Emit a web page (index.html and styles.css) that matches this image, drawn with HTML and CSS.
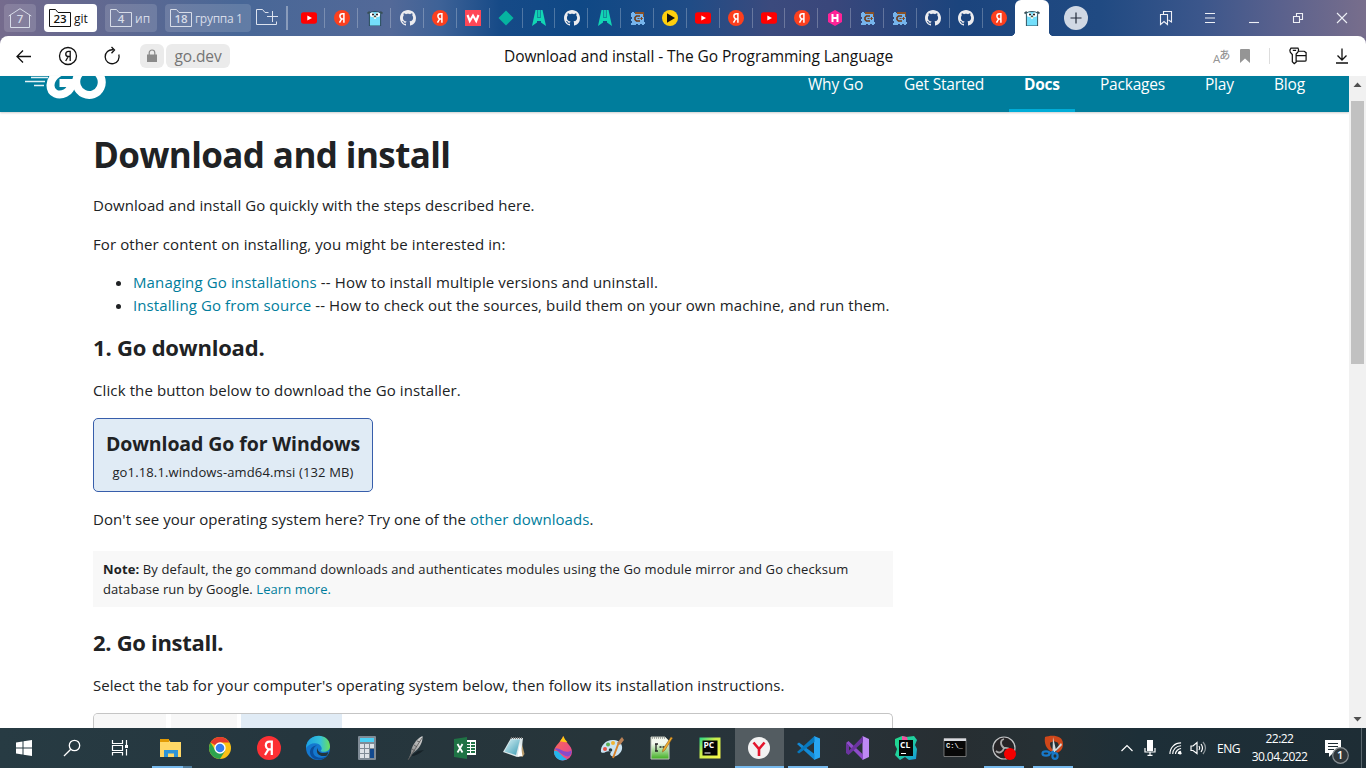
FILE: index.html
```html
<!DOCTYPE html>
<html lang="en">
<head>
<meta charset="utf-8">
<title>Download and install - The Go Programming Language</title>
<link rel="stylesheet" href="styles.css">
</head>
<body>
<svg class="defs" aria-hidden="true">
  <defs>
    <linearGradient id="edge-a" x1="0" y1="0" x2="1" y2="0"><stop offset="0" stop-color="#1ba1e2"/><stop offset=".6" stop-color="#35c1d8"/><stop offset="1" stop-color="#6be05a"/></linearGradient>
    <linearGradient id="drop" x1="0" y1="0" x2="1" y2="1"><stop offset="0" stop-color="#ff6a4d"/><stop offset="1" stop-color="#e0449a"/></linearGradient>
    <linearGradient id="pc" x1="0" y1="0" x2="1" y2="1"><stop offset="0" stop-color="#21d789"/><stop offset=".4" stop-color="#c8ee4c"/><stop offset="1" stop-color="#fcf84a"/></linearGradient>
    <linearGradient id="note" x1="0" y1="0" x2="1" y2="1"><stop offset="0" stop-color="#d8f1f5"/><stop offset="1" stop-color="#3d9db5"/></linearGradient>
    <linearGradient id="npp" x1="0" y1="0" x2="0" y2="1"><stop offset=".3" stop-color="#f4f9ef"/><stop offset="1" stop-color="#3fae20"/></linearGradient>
    <linearGradient id="cl" x1="0" y1="0" x2="1" y2="1"><stop offset="0" stop-color="#21d789"/><stop offset=".5" stop-color="#20d0a0"/><stop offset="1" stop-color="#1695e0"/></linearGradient>
    <linearGradient id="feather" x1="0" y1="1" x2="1" y2="0"><stop offset="0" stop-color="#777"/><stop offset="1" stop-color="#d6d6d6"/></linearGradient>
  </defs>
  <symbol id="yt" viewBox="0 0 16 16"><rect y="2.300" width="16" height="11.400" rx="2.600" fill="#f00"/><path d="M6.300 5.400 11 8l-4.700 2.600z" fill="#fff"/></symbol>
  <symbol id="ya" viewBox="0 0 16 16"><circle cx="8" cy="8" r="8" fill="#fc3f1d"/><path d="M9.900 12.700V3.800H8.400c-1.500 0-2.500.9-2.500 2.500 0 1.300.6 2 1.700 2.700L5.500 12.700M9.900 9H8" fill="none" stroke="#fff" stroke-width="1.500"/></symbol>
  <symbol id="gopher" viewBox="0 0 16 16"><path d="M2.400 16V3.600C2.500.9 13.500.9 13.600 3.600V16z" fill="#74dffb" stroke="#24424e" stroke-width=".9"/><path d="M.5 3.500l2.300-1.700M15.500 3.500l-2.300-1.700" stroke="#384f57" stroke-width="1.800"/><circle cx="5.200" cy="4.800" r="2.300" fill="#fff"/><circle cx="10.800" cy="4.800" r="2.300" fill="#fff"/><circle cx="6" cy="4.600" r="1" fill="#111"/><circle cx="10" cy="4.600" r="1" fill="#111"/><path d="M6.500 6.500h3v1.300h-3z" fill="#ead1a3"/><path d="M7 5.800h2v1H7z" fill="#222"/><path d="M7.200 7.800h1.600v1.200H7.200z" fill="#fff"/></symbol>
  <symbol id="gh" viewBox="0 0 16 16"><path fill="#ececef" d="M8 0C3.580 0 0 3.580 0 8c0 3.540 2.290 6.530 5.470 7.590.4.070.55-.17.55-.38 0-.19-.01-.82-.01-1.490-2.010.37-2.530-.49-2.690-.94-.09-.23-.48-.94-.82-1.130-.28-.15-.68-.52-.01-.53.63-.01 1.080.58 1.230.82.72 1.210 1.870.87 2.330.66.070-.52.28-.87.51-1.070-1.780-.2-3.640-.89-3.640-3.950 0-.87.31-1.590.82-2.150-.08-.2-.36-1.020.08-2.120 0 0 .67-.21 2.200.82.64-.18 1.320-.27 2-.27s1.360.09 2 .27c1.530-1.040 2.200-.82 2.200-.82.44 1.100.16 1.920.08 2.120.51.56.82 1.270.82 2.150 0 3.070-1.870 3.750-3.650 3.950.29.25.54.73.54 1.480 0 1.070-.01 1.930-.01 2.200 0 .21.15.46.55.38A8.010 8.010 0 0 0 16 8c0-4.420-3.580-8-8-8z"/></symbol>
  <symbol id="w" viewBox="0 0 16 16"><rect width="16" height="16" fill="#ff4757"/><path d="M2.500 5l2.300 6L8 5.500l3.200 5.500 2.300-6" fill="none" stroke="#fff" stroke-width="2.100"/></symbol>
  <symbol id="dia" viewBox="0 0 16 16"><path d="M8 .5 15.500 8 8 15.500.5 8z" fill="#06b3a0"/></symbol>
  <symbol id="rocket" viewBox="0 0 16 16"><path d="M4.500 0h2v8h3V0h2L15 16l-5-3.500V11H6v1.500L1 16z" fill="#12d6b4"/><path d="M7.100 0h1.800v7.500H7.100z" fill="#12d6b4"/></symbol>
  <symbol id="cpp" viewBox="0 0 16 16"><path d="M1 3h1v-1h2v1h2v-1h7v3h1v7h1v2h-1v1h-2v-1h-2v1H8v-1H6v1H1v-2h1v-2H1V9h1V7H1z" fill="#76b4ec"/><path d="M5 2h9v5h-1V4H5z" fill="#8b5227"/><path d="M10 6H6.500L5 7.500v2L6.500 11H10" fill="none" stroke="#6f3b17" stroke-width="1.600"/><path d="M7.500 8.500h2M11.500 7v3M10.300 8.500h2.500" stroke="#804a22"/></symbol>
  <symbol id="play" viewBox="0 0 16 16"><circle cx="8" cy="8" r="8" fill="#ffcf0d"/><path d="M5 3.300 13 8l-8 4.700z" fill="#111"/></symbol>
  <symbol id="hex" viewBox="0 0 16 16"><path d="M8 0 15 4v8l-7 4-7-4V4z" fill="#ff2397"/><path d="M5.500 4v8M10.500 4v8M5.500 8h5" stroke="#fff" stroke-width="2"/></symbol>
  <symbol id="folder" viewBox="0 0 22 18"><path d="M.5.500h6l2.500 3h12.500v14H.5z" fill="none" stroke="currentColor"/></symbol>
</svg>

<header class="tabstrip">
  <div class="groups">
    <div class="group home"><svg viewBox="0 0 24 20"><path d="M.7 8 12 .7 23.300 8M2.500 7v12.500h19V7" fill="none" stroke="currentColor"/></svg><b>7</b></div>
    <div class="group current"><span class="fold"><svg><use href="#folder"/></svg><b>23</b></span>git</div>
    <div class="group ip"><span class="fold"><svg><use href="#folder"/></svg><b>4</b></span>ип</div>
    <div class="group gr"><span class="fold"><svg><use href="#folder"/></svg><b>18</b></span><span class="gname">группа 1</span></div>
    <svg class="newgroup" viewBox="0 0 24 20"><path d="M12.500 4.500H9l-2.500-3h-6v15h20v-3M16.500 3v11M11 8.500h11" fill="none" stroke="#dce2ee"/></svg>
  </div>
  <div class="tabs">
    <span><svg><use href="#yt"/></svg></span><span><svg><use href="#ya"/></svg></span><span><svg><use href="#gopher"/></svg></span><span><svg><use href="#gh"/></svg></span><span><svg><use href="#ya"/></svg></span><span><svg><use href="#w"/></svg></span><span><svg><use href="#dia"/></svg></span><span><svg><use href="#rocket"/></svg></span><span><svg><use href="#gh"/></svg></span><span><svg><use href="#rocket"/></svg></span><span><svg><use href="#cpp"/></svg></span><span><svg><use href="#play"/></svg></span><span><svg><use href="#yt"/></svg></span><span><svg><use href="#ya"/></svg></span><span><svg><use href="#yt"/></svg></span><span><svg><use href="#ya"/></svg></span><span><svg><use href="#hex"/></svg></span><span><svg><use href="#cpp"/></svg></span><span><svg><use href="#cpp"/></svg></span><span><svg><use href="#gh"/></svg></span><span><svg><use href="#gh"/></svg></span><span class="last"><svg><use href="#ya"/></svg></span><span class="active"><svg><use href="#gopher"/></svg></span>
  </div>
  <div class="newtab"><svg viewBox="0 0 24 24"><path d="M12 6.500v11M6.500 12h11" stroke="#222b3a" stroke-width="1.200"/></svg></div>
  <div class="winbtns">
    <svg viewBox="0 0 16 16"><path d="M2.500 4.500h7v10L6 11.500l-3.500 3zM5.500 4V1.500h8v10.500l-3-2" /></svg>
    <svg viewBox="0 0 16 16"><path d="M3 3.500h10M3 8h10M3 12.500h10"/></svg>
    <svg viewBox="0 0 16 16"><path d="M3 12.500h10"/></svg>
    <svg viewBox="0 0 16 16"><path d="M3.500 6.500h6v6h-6zM6.500 6V3.500h6v6H10"/></svg>
    <svg viewBox="0 0 16 16"><path d="M3 3l10 10M13 3 3 13"/></svg>
  </div>
</header>

<div class="toolbar">
  <svg class="tb" viewBox="0 0 20 20"><path d="M17 10.500H3.500M9 4.500l-6 6 6 6"/></svg>
  <svg class="tb" viewBox="0 0 20 20"><circle cx="10" cy="10" r="8.500"/><path d="M12.200 15V5.300h-1.600c-3.800 0-3.800 5.200 0 5.200h1.600M10.200 10.500 7.700 15"/></svg>
  <svg class="tb" viewBox="0 0 20 20"><path d="M16.800 8.500A7 7 0 1 1 11 3.800M9.500 1l3 3-3 3.300"/></svg>
  <div class="lock"><svg viewBox="0 0 12 14"><path d="M1 5.500h10V13H1z" fill="#8a8a8a"/><path d="M3.200 6V3.800a2.800 2.800 0 0 1 5.600 0V6" fill="none" stroke="#8a8a8a" stroke-width="1.200"/></svg></div>
  <div class="host">go.dev</div>
  <div class="pagetitle">Download and install - The Go Programming Language</div>
  <div class="tright">
    <span class="translate"><i>A</i><b>あ</b></span>
    <svg class="bm" viewBox="0 0 10 14"><path d="M0 1q0-1 1-1h8q1 0 1 1v13l-5-4.500L0 14z" fill="#959595"/></svg>
    <span class="bar"></span>
    <svg class="key" viewBox="0 0 20 18"><path d="M2 .8h7.500q1.200 1.500 0 4L7.500 7v8.500L5.500 17l-2-2V7.500L1.300 5Q.3 2.500 2 .8zM4 3h3.500M10 4h6l2 1.500v8q0 1-1.500 1H8M8 8.500h9.500"/></svg>
    <svg class="dl" viewBox="0 0 14 16"><path d="M7 .5v11.500M2.500 7.500 7 12l4.500-4.500M1 15h12"/></svg>
  </div>
</div>

<main class="view">
  <div class="page">
    <div class="gohead">
      <svg class="logo" viewBox="0 0 86 24"><path d="M6 1.500h17M0 5.500h20M9 9.500h10" stroke="#e4f2f5" stroke-width="1.500"/><g fill="none" stroke="#fff" stroke-width="8"><path d="M46-4C37-8 26 0 25.500 9c-.3 9 8.500 11.500 15 8 4-2 6-6 6-10H34.500"/><ellipse cx="64" cy="6" rx="12.700" ry="13" transform="rotate(-20 64 6)"/></g></svg>
      <nav><span>Why Go</span><span>Get Started</span><span class="on">Docs</span><span>Packages</span><span>Play</span><span>Blog</span></nav>
    </div>
    <article>
      <h1>Download and install</h1>
      <p class="p1">Download and install Go quickly with the steps described here.</p>
      <p class="p2">For other content on installing, you might be interested in:</p>
      <ul>
        <li class="l1"><a>Managing Go installations</a> -- How to install multiple versions and uninstall.</li>
        <li><a>Installing Go from source</a> -- How to check out the sources, build them on your own machine, and run them.</li>
      </ul>
      <h2>1. Go download.</h2>
      <p class="p3">Click the button below to download the Go installer.</p>
      <div class="download"><strong>Download Go for Windows</strong><span>go1.18.1.windows-amd64.msi (132 MB)</span></div>
      <p class="p4">Don't see your operating system here? Try one of the <a>other downloads</a>.</p>
      <div class="note"><div class="n1"><b>Note:</b> By default, the go command downloads and authenticates modules using the Go module mirror and Go checksum</div><div class="n2">database run by Google. <a>Learn more.</a></div></div>
      <h2 class="second">2. Go install.</h2>
      <p class="p5">Select the tab for your computer's operating system below, then follow its installation instructions.</p>
      <div class="ostabs"><i></i><i></i><i class="sel"></i></div>
    </article>
  </div>
  <div class="scroll"><svg viewBox="0 0 17 25"><path d="M4.500 11 8.500 6.500l4 4.500z"/></svg><div class="thumb"></div><svg class="down" viewBox="0 0 17 17"><path d="M4.500 6l4 4.500 4-4.500z"/></svg></div>
</main>

<footer class="taskbar">
  <div class="sys">
    <span><svg viewBox="0 0 24 24"><path d="M4 6.400 10.500 5.500v6H4zM11.500 5.300 20 4v7.500h-8.500zM4 12.500h6.500v6L4 17.600zM11.500 12.500H20V20l-8.500-1.200z" fill="#fff"/></svg></span>
    <span><svg viewBox="0 0 24 24" fill="none" stroke="#fff" stroke-width="1.300"><circle cx="14.500" cy="9.500" r="5.200"/><path d="M10.800 13.300 4 20"/></svg></span>
    <span><svg viewBox="0 0 24 24" fill="none" stroke="#fff" stroke-width="1.200"><path d="M4.500 4v3.500h10V4M4.500 19.500v-3h10v3M4.500 9.500h10v5h-10zM18.500 4v5M18.500 13v6.500"/><path d="M17 9h3v3h-3z" fill="#fff" stroke="none"/></svg></span>
  </div>
  <div class="apps">
    <span class="explorer"><svg viewBox="0 0 24 24"><path d="M1 4h9l1.500 2H22v15H1z" fill="#ffd766"/><path d="M1 3h9v3H1z" fill="#e29b05"/><path d="M5 21v-7h14v7h-4v-3.500h-6V21z" fill="#2e94d8"/></svg></span>
    <span><svg viewBox="0 0 24 24"><circle cx="12" cy="12" r="11" fill="#fbc116"/><path d="M12 12 2.500 6.500A11 11 0 0 1 21.500 6.500H12z" fill="#e53a2e"/><path d="M2.500 6.500A11 11 0 0 0 12 23l5-8-9.500-.5z" fill="#2da44e"/><circle cx="12" cy="12" r="5.700" fill="#fff"/><circle cx="12" cy="12" r="4.300" fill="#367cf1"/></svg></span>
    <span><svg viewBox="0 0 24 24"><circle cx="12" cy="12" r="12" fill="#fc3034"/><path d="M14.800 19V5.700h-2.200c-2.400 0-3.800 1.400-3.800 3.700 0 2 1 3 2.600 4L8 19M14.800 13.300h-3" fill="none" stroke="#fff" stroke-width="2.200"/></svg></span>
    <span><svg viewBox="0 0 24 24"><circle cx="12" cy="12" r="12" fill="#1478cf"/><path d="M0 12C1-4 24-4 24 10.500c0 5-6 6.500-9.500 4.500 1-1 1.500-2 1-3.500C14 6 4 5.500 0 12z" fill="url(#edge-a)"/><path d="M8 12c-3 6 2 12.500 12.500 8.500C15 26 5 24 4 17c-.5-4 3-8 7-7.500C9.500 10 8.500 11 8 12z" fill="#0b4f9e"/><path d="M11.500 11.500c-.5 5 5 7 11 4.500L21 19.500c-6 2-12-1-9.500-8z" fill="#22343d"/></svg></span>
    <span><svg viewBox="0 0 24 24"><rect x="3" width="18" height="24" rx="1" fill="#7f8b96"/><path d="M5 2h14v4H5z" fill="#4bd0f5"/><path d="M5 8h4v4H5zM10 8h4v4h-4zM15 8h4v4h-4zM5 13h4v4H5zM10 13h4v4h-4zM5 18h4v4H5zM10 18h4v4h-4z" fill="#dde2e7"/><path d="M15 13h4v9h-4z" fill="#124a8f"/></svg></span>
    <span><svg viewBox="0 0 24 24"><path d="M7 20q6 0 13-6l-6 1z" fill="#172228"/><path d="M7 17C7 11 12 3 18.500 0c.5 6-3 13-9.500 17L4 24z" fill="url(#feather)"/><path d="M4 24 18 2M8 13l3 2M10 9l3 2M13 5l3 1" stroke="#555" stroke-width=".8"/></svg></span>
    <span><svg viewBox="0 0 24 24"><path d="M12 4h11v15H12z" fill="#fff"/><path d="M14 6h3v2h-3zm4 0h4v2h-4zm-4 3h3v2h-3zm4 0h4v2h-4zm-4 3h3v2h-3zm4 0h4v2h-4zm-4 3h3v2h-3zm4 0h4v2h-4z" fill="#217346"/><path d="M1 3 14 1v22L1 21z" fill="#1f7345"/><path d="M4.500 8l5 8.500M9.500 8l-5 8.500" stroke="#fff" stroke-width="1.800"/></svg></span>
    <span><svg viewBox="0 0 24 24"><path d="m19 4 3.500 14-2 3-4-2z" fill="#b89b6b"/><path d="M9 2h12l-2 17-4 2-14-5z" fill="#dce8ea"/><path d="M9 3.500h9L14 19 2.500 15.500z" fill="url(#note)"/><path d="M9 2h12" stroke="#777" stroke-dasharray="1 1" stroke-width="2"/><path d="m18 7-2.500 14 5-1z" fill="#fff"/></svg></span>
    <span><svg viewBox="0 0 24 24"><path d="M12 0C11 6 3 9 3 16a9 8.500 0 0 0 18 0C21 9 14 7 12 0z" fill="url(#drop)"/><path d="M12.500 0c-1.500 3-3 4-3.500 5.500 3-.5 5 1 7.500.8C14.500 4 13.500 3 12.500 0z" fill="#ffc914"/><path d="M3.200 13c5-3 9 6 17.500 1.500-.5 5-3 7-6 5.500-5-2-8-6-11.500-7z" fill="#864bcb"/><path d="M3 15c5-2 6 5 13 8C10 27 2.500 22 3 15z" fill="#25b5ec"/></svg></span>
    <span><svg viewBox="0 0 24 24"><path d="M1 16C0 9 7 3 14 4c10 1 11 12 2 16-5 2-7-2-5-4-4-3-7 3-10 0z" fill="#cae3f2"/><circle cx="5" cy="13" r="2" fill="#e55346"/><circle cx="8" cy="8.500" r="2" fill="#5cae55"/><circle cx="13" cy="7" r="2" fill="#f1b434"/><circle cx="10.500" cy="14" r="1.800" fill="#263940"/><path d="m13 22 6-16" stroke="#d9822b" stroke-width="2"/><path d="m17 7 5-6 2 3-4 5z" fill="#b98156"/></svg></span>
    <span><svg viewBox="0 0 24 24"><path d="M2 1h14l4 4v18H2z" fill="url(#npp)" stroke="#bfc5bb"/><path d="M3 2h13" stroke="#666" stroke-dasharray="1 1"/><path d="M7 8v7M6 8h3M6 15h3M10.500 11h2M13.500 11h2" stroke="#222" stroke-width="1.300"/><path d="m13.500 16 .5-3L22 1l1.500 1-7.500 12z" fill="#f5b12c" stroke="#8e5a1c" stroke-width=".6"/></svg></span>
    <span><svg viewBox="0 0 24 24"><path d="M1.500 1.500h21v21h-21z" fill="url(#pc)"/><path d="M4.500 4.500h15v15h-15z" fill="#050505"/><text x="5.500" y="12" class="ptxt">PC</text><path d="M6.500 17h6" stroke="#fff"/></svg></span>
    <span class="focus"><svg viewBox="0 0 24 24"><circle cx="12" cy="12" r="11" fill="#f2f2f2"/><path d="M6.500 6.500 12 13l5.500-6.500M12 12.500V20" fill="none" stroke="#e4152c" stroke-width="2.600"/></svg></span>
    <span class="open"><svg viewBox="0 0 24 24"><path d="M18 0 24 2.500v19L18 24z" fill="#27a5f2"/><path d="M1 8 3 6.500 18.500 18v6L1 8z" fill="#138ad6"/><path d="M1 16 18.500 0v6L3 17.500z" fill="#0879be"/></svg></span>
    <span><svg viewBox="0 0 24 24"><path d="M17.500 0 24 3v18l-6.500 3z" fill="#be88f5"/><path d="M1 7 3.500 5 18 18.500V24z" fill="#8e4cc9"/><path d="M1 17V7l3 2.500v5L18 0v6L3.500 19z" fill="#6b349f"/></svg></span>
    <span><svg viewBox="0 0 24 24"><path d="m1 3 7-3 4 1 8-1 3 4-2 5 2 4-1 10-7 1-4-3-5 3-5-5 2-6-2-4z" fill="url(#cl)"/><path d="m8 0 5 1 1 4H8z" fill="#ef529e"/><path d="M5 4h14v16H5z" fill="#070707"/><text x="6" y="12" class="ptxt">CL</text><path d="M7 17.500h5" stroke="#fff"/></svg></span>
    <span><svg viewBox="0 0 24 24"><path d="M1 2.500h22v18H1z" fill="#080808" stroke="#999" stroke-width=".7"/><path d="M1 2.500h22v2.500H1z" fill="#d9dbe0"/><text x="3" y="12" class="ctxt">C:\_</text></svg></span>
    <span class="open"><svg viewBox="0 0 24 24"><circle cx="12" cy="12" r="11" fill="#262426" stroke="#c2c4c6" stroke-width="1.200"/><path d="M12 12C8 9 8 4 12 3M12 12c5-1 8 2 7 6M12 12c-1 4-5 6-8 3" fill="none" stroke="#aaa" stroke-width="1.800"/><circle cx="18" cy="18" r="6" fill="#f50000"/></svg></span>
    <span class="open"><svg viewBox="0 0 24 24"><path d="M4 1C9-1 22-2 22 8c0 6-4 9-8 9 3-3 5-7 3-10-2-2-6-2-8 0 0 3 1 5 3 7l-1 2C5 13 3 7 4 1z" fill="#cf471a"/><path d="m12 1 3 13-1 2h-2.500zM14 14l6-7 1 2-6 6z" fill="#d5d9db"/><g fill="none" stroke="#1879c9" stroke-width="2.200"><ellipse cx="5" cy="17.500" rx="3.500" ry="2.200"/><ellipse cx="14" cy="20" rx="2.600" ry="2.800"/><path d="m8 17.500 5-2"/></g></svg></span>
  </div>
  <div class="tray">
    <svg class="t1" viewBox="0 0 14 14"><path d="M1.500 10 7 4.500l5.500 5.500" /></svg>
    <svg class="t2" viewBox="0 0 12 16"><rect x="3" y="0" width="6" height="11" fill="#fff" stroke="none"/><path d="M1 8v4h10V8M6 12v3M3.500 15.300h5"/></svg>
    <svg class="t3" viewBox="0 0 14 14"><path d="M1 13C1 6 6 1 13 1M4 13c0-5 4-9 9-9M7 13c0-3 3-6 6-6M10 13c0-2 1-3 3-3"/><circle cx="12" cy="12" r="1.500" fill="#fff" stroke="none"/></svg>
    <svg class="t4" viewBox="0 0 16 14"><path d="M1 5h2l4-3.500v11L3 9.500H1zM9 5q1.500 2 0 4M11 3q3 4 0 8"/><path d="M13 1q5 6 0 12" opacity=".5"/></svg>
    <span class="lang">ENG</span>
    <div class="clock"><span>22:22</span><span class="date">30.04.2022</span></div>
    <div class="notif"><svg viewBox="0 0 24 26"><path d="M0 0h16v13H8l-4 4v-4H0z" fill="#fff"/><path d="M3 3.500h10M3 6.500h10M3 9.500h6" stroke="#1e2c33"/><circle cx="15.500" cy="15.500" r="7.800" fill="#30373b" stroke="#899094"/></svg><b>1</b></div>
  </div>
</footer>
</body>
</html>
```
FILE: styles.css
```css
* { box-sizing: border-box; }
body { margin: 0; width: 1366px; height: 768px; overflow: hidden; display: flex; flex-direction: column; font-family: "Open Sans", "Noto Sans", sans-serif; color: #202224; background: #746c8c; }
svg { display: block; flex: none; overflow: visible; }
.defs { position: absolute; width: 0; height: 0; }
span, div { white-space: nowrap; }

/* tab strip */
.tabstrip { height: 36px; flex: none; display: flex; align-items: center; background: linear-gradient(90deg, #756b8d 0, #67698f 70px, #486797 240px, #536998 390px, #3e6297 440px, #164a87 500px, #0f4885 580px, #204c86 690px, #3b4a7d 770px, #3a477b 830px, #1b447d 960px, #204a82 1100px, #3b568b 1200px, #5a618d 1280px, #786e8c 1366px); }
.groups { width: 292.600px; height: 36px; flex: none; display: flex; align-items: center; padding-left: 4px; font-size: 12px; }
.group { height: 28px; border-radius: 4px; background: rgba(255,255,255,.14); color: #d7dce8; display: flex; align-items: center; flex: none; }
.group b { font-weight: 600; font-size: 11.500px; }
.home { width: 32px; justify-content: center; margin-right: 8px; display: grid; place-items: center; }
.home > * { grid-area: 1 / 1; }
.home svg { width: 24px; height: 20px; }
.current { width: 53px; background: #fff; color: #111; margin-right: 8px; padding-left: 5px; }
.ip { width: 52px; padding-left: 5px; margin-right: 8px; }
.gr { width: 86px; padding-left: 5px; margin-right: 5px; }
.gname { letter-spacing: -.3px; }
.fold { display: grid; width: 22px; height: 18px; margin-right: 3px; place-items: center; }
.fold > * { grid-area: 1 / 1; }
.fold svg { width: 22px; height: 18px; }
.fold b { padding-top: 2px; line-height: 14px; }
.newgroup { width: 24px; height: 20px; margin-right: 6px; }
.groups::after { content: ""; width: 2px; height: 24px; background: rgba(255,255,255,.35); }
.tabs { display: grid; grid-template-columns: repeat(21, 32.870px) 32.130px 34px; flex: none; height: 36px; }
.tabs span { display: flex; align-items: center; justify-content: center; height: 36px; background: linear-gradient(rgba(255,255,255,.25), rgba(255,255,255,.25)) right 8px / 1px 20px no-repeat; }
.tabs span.last { background: radial-gradient(circle at 0 0, transparent 5px, #fff 5.500px) 100% 100% / 5px 5px no-repeat; }
.tabs svg { width: 16px; height: 16px; }
.tabs span.active { background: #fff; border-radius: 6px 6px 0 0; }
.tabs::after { content: ""; grid-area: 1 / 24; width: 5px; height: 5px; margin: 31px -5px 0 0; background: radial-gradient(circle at 100% 0, transparent 5px, #fff 5.500px); }
.newtab { margin-left: 15px; width: 24px; height: 24px; border-radius: 50%; background: #d0d8e4; }
.winbtns { margin-left: auto; margin-right: 16px; display: flex; gap: 28px; }
.winbtns svg { width: 16px; height: 16px; fill: none; stroke: #eef0f6; stroke-width: 1.100; }

/* toolbar */
.toolbar { height: 40px; flex: none; background: #fff; border-radius: 8px 8px 0 0; display: grid; grid-template-columns: 20px 20px 20px 24px 64px 1fr 153px; align-items: center; padding-left: 14px; }
.tb { width: 20px; height: 20px; fill: none; stroke: #111; stroke-width: 1.300; }
.tb:nth-child(2) { margin-left: 24px; }
.tb:nth-child(3) { margin-left: 48px; }
.lock { width: 24px; height: 24px; margin-left: 66px; border-radius: 6px; background: #ebebeb; display: grid; place-items: center; }
.lock svg { width: 12px; height: 14px; }
.host { width: 64px; height: 24px; margin-left: 68px; border-radius: 6px; background: #ebebeb; color: #757575; font-size: 15.500px; line-height: 24px; text-align: center; letter-spacing: -.1px; }
.pagetitle { font-size: 15.500px; color: #111; padding-left: 342px; letter-spacing: -.08px; }
.tright { display: flex; align-items: center; height: 40px; }
.translate { width: 16px; color: #959595; display: flex; align-items: center; font-family: "Open Sans", "Noto Sans CJK JP", sans-serif; }
.translate i { font-style: normal; font-size: 11.500px; padding-top: 4px; }
.translate b { font-size: 11px; font-weight: 500; padding-bottom: 5px; margin-left: -1px; }
.bm { width: 10px; height: 14px; margin-left: 11px; }
.bar { width: 1px; height: 16px; background: #ddd; margin-left: 19px; }
.key { width: 19px; height: 18px; margin-left: 19px; }
.dl { width: 14px; height: 16px; margin-left: 27px; }
.key, .dl { fill: none; stroke: #111; stroke-width: 1.300; }

/* page */
.view { height: 652px; flex: none; display: flex; background: #fff; }
.page { width: 1349px; height: 652px; }
.gohead { height: 36px; background: #007d9c; box-shadow: 0 1px 2px rgba(0,0,0,.2); display: flex; justify-content: space-between; }
.logo { width: 86px; height: 24px; margin-left: 25px; overflow: hidden; }
nav { display: grid; grid-template-columns: 56px 80px 36px 65px 29px 32px; column-gap: 40px; margin-right: 43px; height: 36px; color: #fff; font-size: 15.500px; line-height: 16px; letter-spacing: -.2px; }
nav .on { font-weight: 700; letter-spacing: -.3px; margin: 0 -15px; padding-left: 15px; border-bottom: 3px solid #00add8; }
article { padding: 18px 0 0 93px; width: 893px; }
h1, h2, p, ul { margin: 0; white-space: nowrap; }
h1 { font-size: 35px; line-height: 50px; letter-spacing: -.6px; }
p, li { font-size: 15px; letter-spacing: .1px; }
p { line-height: 24px; }
a { color: #007d9c; }
.p1 { margin-top: 13px; letter-spacing: .065px; }
.p2 { margin-top: 15px; }
ul { margin-top: 15px; padding-left: 40px; }
li { line-height: 23px; }
.l1 { letter-spacing: .13px; }
h2 { font-size: 22px; line-height: 30px; margin-top: 15px; letter-spacing: -.2px; }
.p3 { margin-top: 16px; letter-spacing: .11px; }
.download { margin-top: 16px; width: 280px; height: 74px; border: 1px solid #375eab; border-radius: 5px; background: #e0ebf5; display: flex; flex-direction: column; align-items: center; padding-top: 10px; }
.download strong { font-size: 19.500px; line-height: 30px; letter-spacing: -.1px; }
.download span { font-size: 13px; line-height: 26px; letter-spacing: .14px; }
.p4 { margin-top: 15px; letter-spacing: .06px; }
.note { margin-top: 20px; width: 800px; height: 56px; background: #f8f8f8; padding: 8px 10px; font-size: 13px; line-height: 20px; }
.n1 { letter-spacing: .13px; }
.n2 { letter-spacing: .09px; }
.second { margin-top: 20px; letter-spacing: -.3px; }
.p5 { margin-top: 16px; letter-spacing: .055px; }
.ostabs { margin-top: 16px; width: 800px; height: 15px; border: 1px solid #c5c5c5; border-bottom: 0; border-radius: 5px 5px 0 0; display: flex; overflow: hidden; }
.ostabs i { width: 72px; margin-right: 5px; background: #f7f7f7; }
.ostabs i + i { width: 66px; margin-right: 4px; }
.ostabs i.sel { width: 101px; background: #e0ebf5; }
.scroll { width: 17px; background: #f1f1f1; display: flex; flex-direction: column; align-items: center; fill: #505050; }
.scroll svg { width: 17px; height: 25px; }
.thumb { width: 13px; height: 263px; background: #c1c1c1; }
.scroll svg.down { height: 17px; margin-top: auto; }

/* taskbar */
.taskbar { height: 40px; flex: none; display: flex; background: linear-gradient(90deg, #273b43 0, #25363e 300px, #27353a 600px, #28333a 800px, #272e32 950px, #263034 1040px, #1d2f38 1140px, #1e2d35 1366px); color: #fff; }
.taskbar::after { content: ""; width: 1px; margin: 0 4px 0 auto; background: #59666d; }
.sys { display: grid; grid-template-columns: repeat(3, 48px); width: 146.500px; flex: none; }
.taskbar span { display: flex; align-items: center; justify-content: center; }
.sys svg, .apps svg { width: 24px; height: 24px; }
.apps { display: grid; grid-template-columns: repeat(19, 49px); flex: none; }
.apps .explorer { background: linear-gradient(90deg, #76b9ed 31px, #4f7c9c 31px) 5px 100% / 40px 2px no-repeat; }
.apps .open { background: linear-gradient(#76b9ed, #76b9ed) 50% 100% / 40px 2px no-repeat; }
.apps .focus { background: #535c61; border-bottom: 2px solid #76b9ed; padding-top: 2px; }
.ptxt { font: 700 8.500px "Open Sans", sans-serif; fill: #fff; }
.ctxt { font: 700 7px "Liberation Mono", monospace; fill: #eee; }
.tray { display: flex; align-items: center; padding-left: 42px; font-size: 12px; }
.tray svg { fill: none; stroke: #fff; stroke-width: 1.200; }
.t1 { width: 14px; height: 14px; }
.t2 { width: 12px; height: 16px; margin-left: 10px; }
.t3 { width: 13px; height: 13px; margin-left: 13px; }
.t4 { width: 16px; height: 14px; margin-left: 8px; }
.lang { margin-left: 11px; width: 24px; letter-spacing: -.4px; }
.clock { margin-left: 11px; width: 56px; display: flex; flex-direction: column; align-items: center; line-height: 18px; letter-spacing: -.55px; }
.notif { display: grid; margin: 10px 0 0 17px; width: 24px; height: 26px; }
.notif > * { grid-area: 1 / 1; }
.tray .notif svg { width: 24px; height: 26px; stroke: none; }
.notif b { font-size: 11px; font-weight: 600; line-height: 14px; padding: 8px 0 0 12.500px; z-index: 1; }
```
